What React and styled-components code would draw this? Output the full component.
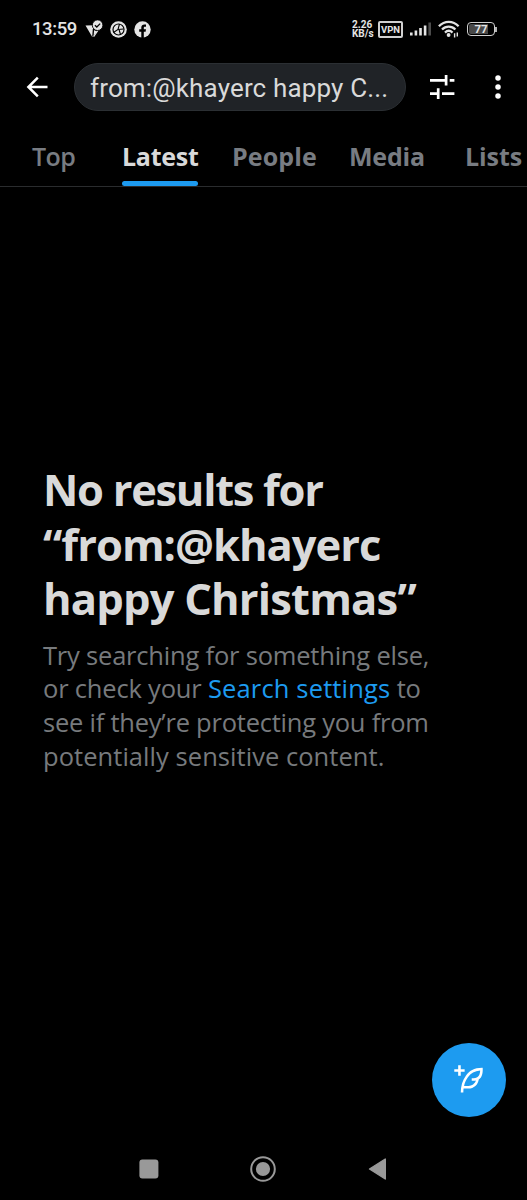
import styled, { createGlobalStyle } from "styled-components";

const tabs = [
  { label: "Top", width: 44, left: 32, weight: 600, spacing: -0.6 },
  { label: "Latest", width: 76, left: 46, weight: 700, spacing: -0.25, active: true },
  { label: "People", width: 85, left: 34, weight: 700, spacing: 0.1 },
  { label: "Media", width: 76, left: 32, weight: 700, spacing: -0.2 },
  { label: "Lists", width: 60, left: 40, weight: 700, spacing: -0.1 },
];

const App = () => {
  return (
    <Screen>
      <StatusBar>
        <Clock>13:59</Clock>
        <NotificationIcons>
          <svg width="18" height="18" viewBox="0 0 18 18">
            <path d="M0.5 5.6 L9 5.2 L13 10.5 L7.3 17 Z" fill="#e4e4e4" />
            <path d="M8.5 9 L7.9 16.5 M8.5 9 L13 11" stroke="#000" strokeWidth="1.4" fill="none" />
            <path d="M13.2 10 L8.6 16.6" stroke="#e4e4e4" strokeWidth="1.3" />
            <circle cx="12.6" cy="5.2" r="5.3" fill="#e4e4e4" stroke="#000" strokeWidth="0.9" />
            <path d="M9.9 5.2 L11.8 7 L15.2 3.6" stroke="#000" strokeWidth="1.3" fill="none" />
          </svg>
          <svg width="17" height="17" viewBox="0 0 17 17">
            <circle cx="8.5" cy="8.5" r="8.3" fill="#e4e4e4" />
            <circle cx="8.5" cy="8.5" r="5.5" fill="none" stroke="#000" strokeWidth="1.2" />
            <path
              d="M9.5 3 L8 8.5 L3.5 11.5 M8 8.5 L13.5 8 M9 8.5 L10.5 13.5"
              stroke="#000"
              strokeWidth="1.1"
              fill="none"
            />
          </svg>
          <svg width="17" height="17" viewBox="0 0 17 17">
            <circle cx="8.5" cy="8.5" r="8.2" fill="#e4e4e4" />
            <path
              d="M7.3 17 V10.8 H5.2 V8.3 H7.3 V6.6 C7.3 4.4 8.6 3.4 10.4 3.4 H12 V5.7 H10.9 C10 5.7 9.8 6.1 9.8 6.8 V8.3 H12 L11.6 10.8 H9.8 V17 Z"
              fill="#000"
            />
          </svg>
        </NotificationIcons>
        <NetworkSpeed>
          <span>2.26</span>
          <span>KB/s</span>
        </NetworkSpeed>
        <VpnBadge>VPN</VpnBadge>
        <Signal width="22" height="14" viewBox="0 0 22 14">
          <rect x="0" y="10.5" width="2.6" height="3" fill="#e4e4e4" />
          <rect x="4.6" y="8.5" width="2.6" height="5" fill="#e4e4e4" />
          <rect x="9.2" y="6" width="2.6" height="7.5" fill="#e4e4e4" />
          <rect x="13.8" y="3.5" width="2.6" height="10" fill="#e4e4e4" />
          <rect x="18.4" y="0.5" width="2.6" height="13" fill="#4c4c4c" />
        </Signal>
        <Wifi width="22" height="18" viewBox="0 0 22 18">
          <g fill="none" stroke="#e4e4e4" strokeWidth="2.3">
            <path d="M0.9 6.2 C6.5 0.4 15 0.4 20.6 6.2" />
            <path d="M4 9.5 C7.8 5.6 13.6 5.6 17.4 9.5" />
            <path d="M7 12.6 C9.3 10.3 12.2 10.3 14.5 12.6" />
          </g>
          <circle cx="10.6" cy="15" r="1.9" fill="#e4e4e4" />
          <path d="M16.6 13.3 V17.4 M19.3 12.6 V16.6" stroke="#e4e4e4" strokeWidth="1.4" />
        </Wifi>
        <Battery>
          <BatteryBody>77</BatteryBody>
          <BatteryTip />
        </Battery>
      </StatusBar>

      <SearchBar>
        <BackArrow width="22" height="22" viewBox="0 0 22 22">
          <path
            d="M21.5 11 H2 M11.8 1.6 L2.4 11 L11.8 20.4"
            fill="none"
            stroke="#fff"
            strokeWidth="2.5"
          />
        </BackArrow>
        <SearchField>from:@khayerc happy C...</SearchField>
        <FilterIcon width="25" height="24" viewBox="0 0 25 24">
          <path
            d="M0 5.3 H15.5 M19.7 5.3 H24.4 M16.1 0 V10.6 M0 18.6 H7.5 M12 18.6 H24.4 M8.2 13.2 V24"
            fill="none"
            stroke="#fff"
            strokeWidth="2.7"
          />
        </FilterIcon>
        <MoreIcon width="6" height="24" viewBox="0 0 6 24">
          <circle cx="3" cy="2.9" r="2.75" fill="#fff" />
          <circle cx="3" cy="12" r="2.75" fill="#fff" />
          <circle cx="3" cy="21.1" r="2.75" fill="#fff" />
        </MoreIcon>
      </SearchBar>

      <Tabs>
        {tabs.map((tab) => (
          <Tab
            key={tab.label}
            $width={tab.width}
            $left={tab.left}
            $weight={tab.weight}
            $spacing={tab.spacing}
            $active={tab.active}
          >
            {tab.label}
          </Tab>
        ))}
      </Tabs>

      <EmptyState>
        <Title>
          <Line $spacing={-1.3}>No results for</Line>
          <Line $spacing={-1}>“from:@khayerc</Line>
          <Line $spacing={-0.8}>happy Christmas”</Line>
        </Title>
        <Description>
          <Line $spacing={-0.2}>Try searching for something else,</Line>
          <Line $spacing={-0.19}>
            or check your <SettingsLink>Search settings</SettingsLink> to
          </Line>
          <Line $spacing={-0.23}>see if they’re protecting you from</Line>
          <Line $spacing={0.05}>potentially sensitive content.</Line>
        </Description>
      </EmptyState>

      <ComposeRow>
        <ComposeButton>
          <svg width="31" height="31" viewBox="0 0 24 24" fill="#fff">
            <path d="M23 3c-6.62-.1-10.38 2.421-13.05 6.03C7.29 12.61 6 17.331 6 22h2c0-1.007.07-2.012.19-3H12c4.1 0 7.48-3.082 7.94-7.054C22.79 10.147 23.17 6.359 23 3zm-7 8h-1.5v2H16c.63-.016 1.2-.08 1.72-.188C16.95 15.24 14.68 17 12 17H8.55c.57-2.512 1.57-4.851 3-6.78 2.16-2.912 5.29-4.911 9.45-5.187C20.95 8.079 19.9 11 16 11zM4 9V6H1V4h3V1h2v3h3v2H6v3H4z" />
          </svg>
        </ComposeButton>
      </ComposeRow>

      <NavBar>
        <svg width="20" height="20" viewBox="0 0 20 20">
          <rect x="0.4" y="0.4" width="19" height="19" rx="3" fill="#999" />
        </svg>
        <svg width="26" height="26" viewBox="0 0 26 26">
          <circle cx="13" cy="13" r="11.8" fill="none" stroke="#999" strokeWidth="2" />
          <circle cx="13" cy="13" r="7.1" fill="#999" />
        </svg>
        <svg width="20" height="22" viewBox="0 0 20 22">
          <path
            d="M2.5 11 L18.3 1 V21 Z"
            fill="#999"
            stroke="#999"
            strokeWidth="1.4"
            strokeLinejoin="round"
          />
        </svg>
      </NavBar>
    </Screen>
  );
};

const GlobalStyle = createGlobalStyle`
  body {
    margin: 0;
    background: #000;
  }
  * {
    box-sizing: border-box;
  }
  svg {
    display: block;
    flex-shrink: 0;
  }
`;

const Page = () => (
  <>
    <GlobalStyle />
    <App />
  </>
);

const Screen = styled.div`
  width: 527px;
  height: 1200px;
  overflow: hidden;
  display: flex;
  flex-direction: column;
  background: #000;
  font-family: Roboto, sans-serif;
`;

const StatusBar = styled.div`
  height: 58px;
  flex-shrink: 0;
  display: flex;
  align-items: center;
  padding: 0 30px 0 32px;
  color: #e4e4e4;
`;

const Clock = styled.div`
  width: 53px;
  font-size: 18.5px;
  font-weight: 500;
  letter-spacing: -0.4px;
  line-height: 22px;
`;

const NotificationIcons = styled.div`
  display: flex;
  align-items: center;
  gap: 7px;
`;

const NetworkSpeed = styled.div`
  display: flex;
  flex-direction: column;
  width: 26px;
  margin-left: auto;
  font-size: 10px;
  font-weight: 700;
  line-height: 9.5px;
`;

const VpnBadge = styled.div`
  display: flex;
  align-items: center;
  justify-content: center;
  width: 25px;
  height: 17px;
  border: 2px solid #d0d0d0;
  border-radius: 2px;
  font-size: 9.5px;
  font-weight: 700;
`;

const Signal = styled.svg`
  margin-left: 7px;
`;

const Wifi = styled.svg`
  margin-left: 6px;
`;

const Battery = styled.div`
  display: flex;
  align-items: center;
  margin-left: 7px;
`;

const BatteryBody = styled.div`
  display: flex;
  align-items: center;
  justify-content: center;
  width: 28px;
  height: 14px;
  border: 1.5px solid #d0d0d0;
  border-radius: 4px;
  background: linear-gradient(90deg, #484848 76%, #000 76%);
  background-clip: content-box;
  padding: 1px;
  font-size: 11.5px;
  font-weight: 700;
  line-height: 10px;
`;

const BatteryTip = styled.div`
  width: 2px;
  height: 5px;
  background: #b4b4b4;
`;

const SearchBar = styled.div`
  height: 72px;
  flex-shrink: 0;
  display: flex;
  align-items: center;
  padding: 0 26px 14px;
`;

const BackArrow = styled.svg`
  margin-right: 26px;
`;

const SearchField = styled.div`
  width: 332px;
  height: 48px;
  padding-left: 15px;
  border: 1px solid #2b2f33;
  border-radius: 24px;
  background: #202327;
  color: #d9d9d9;
  font-size: 26px;
  letter-spacing: 0.15px;
  line-height: 48px;
  white-space: nowrap;
`;

const FilterIcon = styled.svg`
  margin-left: 24px;
`;

const MoreIcon = styled.svg`
  margin-left: 40px;
`;

const Tabs = styled.div`
  height: 57px;
  flex-shrink: 0;
  display: flex;
  border-bottom: 1px solid #2a2c2e;
`;

const Tab = styled.div`
  width: ${(props) => props.$width}px;
  margin-left: ${(props) => props.$left}px;
  flex-shrink: 0;
  color: ${(props) => (props.$active ? "#d9d9d9" : "#787c82")};
  font-family: "Open Sans", sans-serif;
  font-size: 25px;
  font-weight: ${(props) => props.$weight};
  letter-spacing: ${(props) => props.$spacing}px;
  line-height: 52px;
  white-space: nowrap;

  &::after {
    content: "";
    display: ${(props) => (props.$active ? "block" : "none")};
    height: 5px;
    margin-top: -1px;
    border-radius: 3px;
    background: #1d9bf0;
  }
`;

const EmptyState = styled.div`
  padding: 276px 0 0 43px;
  flex: 1;
`;

const Title = styled.h1`
  margin: 0;
  color: #d9d9d9;
  font-family: "Open Sans", sans-serif;
  font-size: 43.5px;
  font-weight: 700;
  line-height: 54.6px;
`;

const Description = styled.p`
  margin: 12px 0 0;
  color: #777a7d;
  font-family: "Open Sans", sans-serif;
  font-size: 25.5px;
  line-height: 33.7px;
`;

const Line = styled.span`
  display: block;
  letter-spacing: ${(props) => props.$spacing}px;
  white-space: nowrap;
`;

const SettingsLink = styled.span`
  color: #1d9bf0;
  letter-spacing: 0.15px;
`;

const ComposeRow = styled.div`
  display: flex;
  justify-content: flex-end;
  padding: 0 21.5px 20.5px 0;
`;

const ComposeButton = styled.button`
  display: flex;
  align-items: center;
  justify-content: center;
  width: 74px;
  height: 74px;
  padding: 0;
  border: none;
  border-radius: 50%;
  background: #1d9bf0;
`;

const NavBar = styled.div`
  height: 63px;
  flex-shrink: 0;
  display: flex;
  align-items: center;
  gap: 91px;
  padding-left: 139px;
`;

export default Page;
